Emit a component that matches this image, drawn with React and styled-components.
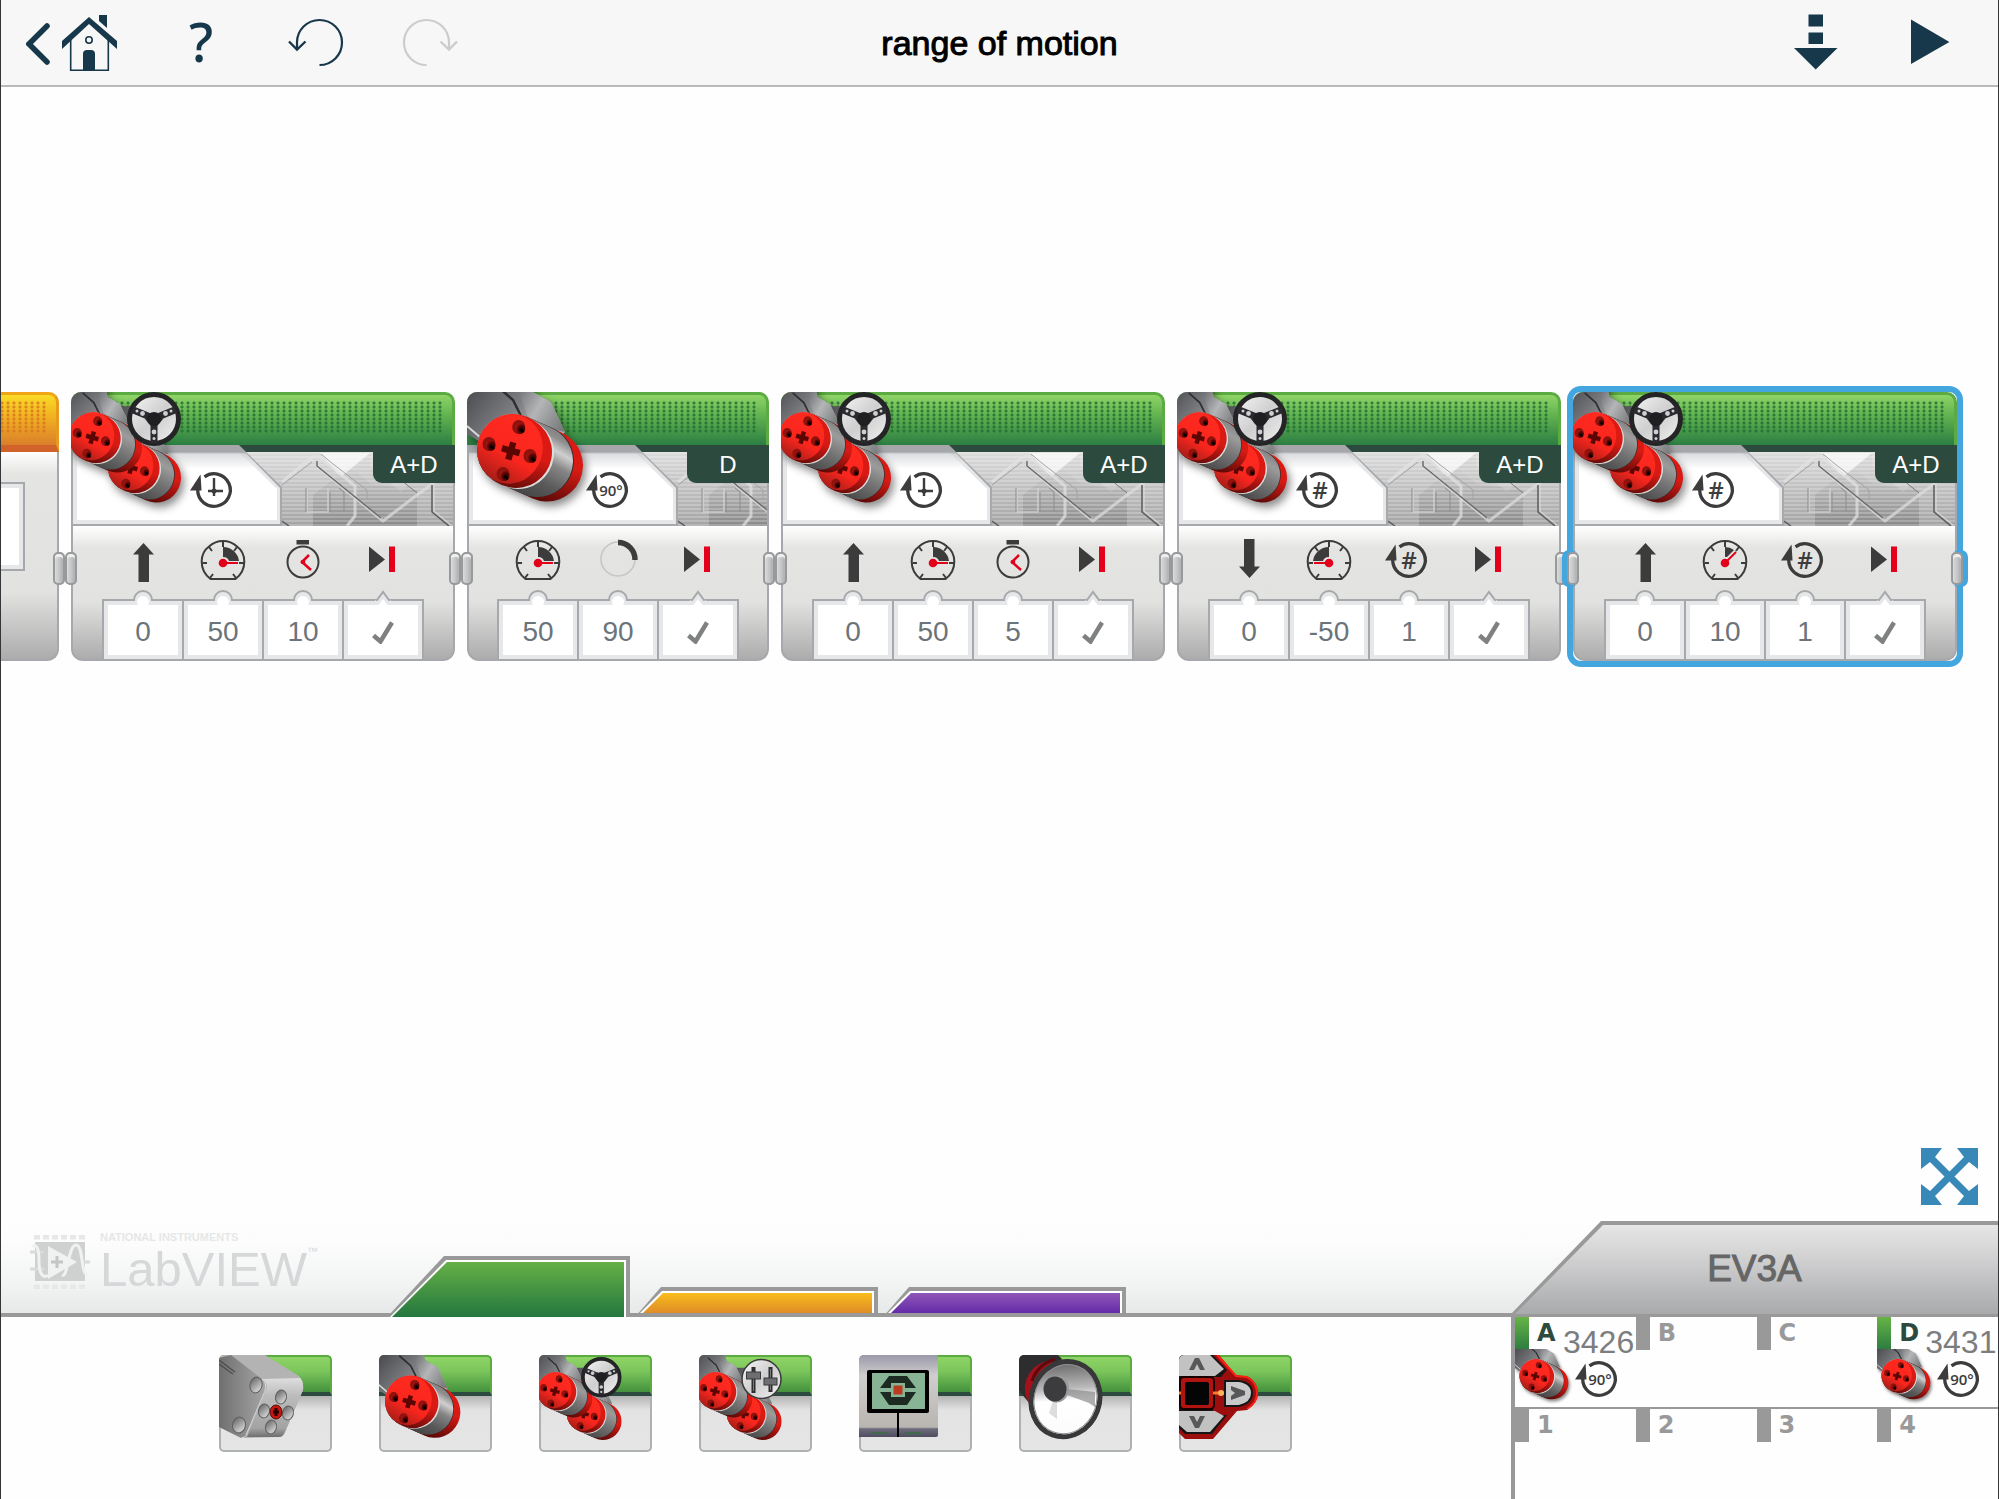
import React from "react";
import styled, { createGlobalStyle, css } from "styled-components";

const navy = "#17374a";
const line = "#999999";
const edge = "#a6a8ab";
const blue = "#43a6df";
const sans = `"Liberation Sans", Arial, sans-serif`;
const wide = `"DejaVu Sans", Verdana, sans-serif`;

const GlobalStyle = createGlobalStyle`
  *, *::before, *::after { box-sizing: border-box; }
  body { margin: 0; background: #fefefe; font-family: ${sans}; }
  svg { display: block; }
  button { margin: 0; padding: 0; border: 0; background: none; font: inherit; cursor: pointer; }
`;

const Page = styled.div`
  display: flex;
  flex-direction: column;
  min-height: 100vh;
  border: solid #333538;
  border-width: 0 1px;
  overflow: hidden;
`;

/* ---------- toolbar ---------- */

const Toolbar = styled.header`
  display: grid;
  grid-template-columns: 1fr auto 1fr;
  align-items: center;
  height: 87px;
  padding: 0 49px 0 25px;
  background: #f7f7f7;
  border-bottom: 2px solid #b9b9b9;
`;

const ToolGroup = styled.div`
  display: flex;
  align-items: center;
  justify-content: ${(p) => (p.$end ? "flex-end" : "flex-start")};
  gap: ${(p) => (p.$end ? "73px" : "58px")};
`;

const ToolButton = styled.button`
  display: flex;
  align-items: center;
  justify-content: center;
  width: ${(p) => p.$width}px;
  height: 64px;
  color: ${navy};
  &:disabled { color: #cccccc; cursor: default; }
`;

const Help = styled.span`
  padding-bottom: 4px;
  font: 500 54px/60px "Noto Sans", "Open Sans", sans-serif;
`;

const Title = styled.h1`
  margin: 0;
  padding-left: 24px;
  font: 400 34px/40px ${sans};
  color: #000;
  -webkit-text-stroke: 1px #000;
`;

/* ---------- canvas ---------- */

const Canvas = styled.main`
  flex: 1;
  display: flex;
  flex-direction: column;
  justify-content: space-between;
  align-items: flex-end;
  padding: 305px 20px 16px 0;
`;

const Program = styled.div`
  display: flex;
  gap: 12px;
  width: 100%;
  padding-right: 21px;
`;

const BlockBox = styled.section`
  position: relative;
  flex: none;
  display: flex;
  flex-direction: column;
  width: ${(p) => p.$width}px;
  height: 269px;
  border-radius: 10px 10px 12px 12px;
  ${(p) =>
    p.$selected &&
    css`
      &::before {
        content: "";
        position: absolute;
        inset: -6px;
        border: 6px solid ${blue};
        border-radius: 14px;
      }
    `}
`;

const StartBox = styled(BlockBox)`
  flex: 1;
  width: auto;
  min-width: 0;
`;

const dots = (c) => css`
  &::after {
    content: "";
    position: absolute;
    inset: 6px 9px 12px 0;
    background: radial-gradient(circle, ${c} 1px, transparent 2px) right top / 6px 4px;
    opacity: 0.8;
  }
`;

const Head = styled.div`
  position: relative;
  height: 53px;
  border: solid #5cab42;
  border-width: 3px 3px 0 0;
  border-radius: 10px 10px 0 0;
  background: linear-gradient(#8fd466, #62b350 40%, #2c7f42);
  ${dots("#1f6d33")}
`;

const StartHead = styled(Head)`
  height: 60px;
  border-width: 3px 3px 7px 0;
  border-color: #f0a518 #e89a1c #d0622a;
  border-radius: 0 10px 0 0;
  background: linear-gradient(#fadb25, #f0b022 45%, #da7f2a);
  ${dots("#d8741f")}
`;

const Middle = styled.div`
  position: relative;
  display: flex;
  align-items: flex-start;
  height: 81px;
  border-top: 7px solid #2c4a3d;
  border-bottom: 2px solid ${edge};
  border-left: 2px solid ${edge};
  overflow: visible;
`;

const Texture = styled.svg`
  position: absolute;
  left: -2px;
  top: 0;
  width: calc(100% + 2px);
  height: 74px;
  border-right: 2px solid ${edge};
`;

const ModePanel = styled.button`
  position: relative;
  width: 211px;
  height: 81px;
  margin: -7px 0 0 -2px;
  background: ${edge};
  clip-path: polygon(0 0, 168px 0, 211px 42px, 211px 100%, 0 100%);
  &::before {
    content: "";
    position: absolute;
    inset: 0;
    background: linear-gradient(#a6a7aa 0, #a6a7aa 7px, #d2d3d5 9px, #e6e7e9 18px);
    clip-path: polygon(2px 0, 167px 0, 209px 43px, 209px 79px, 2px 79px);
  }
  &::after {
    content: "";
    position: absolute;
    inset: 0;
    background: linear-gradient(#a6a7aa 0, #a6a7aa 7px, #dcdddf 9px, #ffffff 24px);
    clip-path: polygon(6px 7px, 168px 7px, 206px 44px, 206px 75px, 6px 75px);
  }
`;

const ModeIcon = styled.span`
  position: absolute;
  z-index: 1;
  left: 119px;
  top: 21px;
`;

const PortTag = styled.button`
  position: relative;
  width: 82px;
  height: 31px;
  margin-left: auto;
  padding-bottom: 6px;
  border-bottom-left-radius: 9px;
  background: #2c4a3d;
  color: #fff;
  font: 400 24px/24px ${sans};
`;

const Art = styled.svg`
  position: absolute;
  left: 0;
  top: 0;
  width: 130px;
  height: 130px;
  border-top-left-radius: ${(p) => (p.$tile ? 5 : 10)}px;
  pointer-events: none;
`;

const Body = styled.div`
  flex: 1;
  display: flex;
  justify-content: center;
  border: 2px solid ${edge};
  border-top: 0;
  border-radius: 0 0 12px 12px;
  background: linear-gradient(#ffffff, #e4e4e2 22px, #e2e2e1 75px, #acacac);
`;

const StartBody = styled(Body)`
  justify-content: flex-end;
  padding: 30px 32px 0 0;
  border-left: 0;
  border-radius: 0 0 12px 0;
  background: linear-gradient(#ffffff, #e4e4e2 22px, #e2e2e1 140px, #acacac);
`;

const StartField = styled.div`
  width: 60px;
  flex: none;
  height: 89px;
  border: 2px solid ${edge};
  background: #fff;
  box-shadow: inset 0 0 0 4px #e6e7e9;
`;

const Param = styled.div`
  display: flex;
  flex-direction: column;
  align-items: center;
  width: 80px;
  padding-top: 10px;
  &:last-child { width: 82px; }
`;

const ParamIcon = styled.div`
  height: 63px;
  padding-left: 2px;
`;

const Cell = styled.label`
  position: relative;
  display: flex;
  align-items: center;
  justify-content: center;
  width: 100%;
  flex: 1;
  padding-top: 3px;
  border: solid ${edge};
  border-width: 2px 0 0 2px;
  background: #fff;
  box-shadow: inset 0 0 0 4px #e6e7e9;
  ${Param}:last-child & { border-right-width: 2px; }
`;

const Notch = styled.svg`
  position: absolute;
  left: calc(50% - 14px);
  top: -11px;
`;

const Value = styled.input`
  width: 68px;
  height: 44px;
  padding: 0;
  border: 0;
  background: none;
  text-align: center;
  font: 400 28px/32px ${sans};
  color: #6b747b;
  outline: none;
`;

const Tick = styled.input`
  position: absolute;
  inset: 0;
  width: 100%;
  height: 100%;
  margin: 0;
  opacity: 0;
`;

const Plug = styled.span`
  position: absolute;
  top: 160px;
  ${(p) => (p.$side === "left" ? "left: -6px;" : "right: -6px;")}
  width: 12px;
  height: 33px;
  border: 2px solid #97999b;
  border-radius: 5px;
  background: linear-gradient(90deg, #d9dadb, #c2c3c4 60%, #a9aaab);
  box-shadow: inset 0 3px 1px #f0f0f0
    ${(p) => (p.$selected ? `, ${p.$side === "left" ? "-3px" : "3px"} 0 0 2px ${blue}` : "")};
`;

const FitButton = styled.button`
  width: 57px;
  height: 57px;
`;

/* ---------- footer ---------- */

const Footer = styled.footer`
  display: grid;
  grid-template-columns: minmax(0, 1fr) 487px;
`;

const Palette = styled.div`
  display: flex;
  flex-direction: column;
`;

const stripFill = "linear-gradient(#fefefe, #fcfcfc 25%, #f3f4f4 65%, #e7e9e9)";

const TabStrip = styled.div`
  display: flex;
  align-items: flex-end;
  height: 96px;
  padding-left: 29px;
  border-bottom: 4px solid ${line};
  background: ${stripFill};
`;

const Logo = styled.div`
  display: flex;
  align-items: flex-start;
  gap: 10px;
  width: 357px;
  height: 82px;
`;

const LogoIcon = styled.svg`
  margin-top: 4px;
`;

const LogoText = styled.div`
  display: flex;
  flex-direction: column;
  gap: 2px;
  color: #d6d7d8;
`;

const Maker = styled.span`
  font: 700 11px/12px ${sans};
  color: #e6e7e7;
`;

const Product = styled.span`
  display: flex;
  align-items: flex-start;
  font: 400 49px/48px ${sans};
`;

const Mark = styled.sup`
  font: 400 11px/12px ${sans};
`;

const Tabs = styled.nav`
  display: flex;
  align-items: flex-end;
  gap: 5px;
  margin-bottom: -4px;
`;

const Tab = styled.button`
  position: relative;
  width: 243px;
  height: ${(p) => (p.$open ? 61 : 30)}px;
  background: ${line};
  clip-path: ${(p) =>
    p.$open
      ? "polygon(57px 0, 100% 0, 100% 100%, 0 100%)"
      : "polygon(26px 0, 100% 0, 100% 100%, 0 100%)"};
  &::before, &::after {
    content: "";
    position: absolute;
    inset: 0;
  }
  &::before {
    background: #fff;
    clip-path: ${(p) =>
      p.$open
        ? "polygon(59px 4px, calc(100% - 4px) 4px, calc(100% - 4px) 100%, 3px 100%)"
        : "polygon(27px 4px, calc(100% - 4px) 4px, calc(100% - 4px) calc(100% - 4px), 5px calc(100% - 4px))"};
  }
  &::after {
    background: linear-gradient(${(p) => p.$from} 6px, ${(p) => p.$to});
    clip-path: ${(p) =>
      p.$open
        ? "polygon(60px 6px, calc(100% - 6px) 6px, calc(100% - 6px) 100%, 5px 100%)"
        : "polygon(28px 6px, calc(100% - 6px) 6px, calc(100% - 6px) calc(100% - 4px), 8px calc(100% - 4px))"};
  }
`;

const Tiles = styled.div`
  display: flex;
  gap: 47px;
  padding: 38px 0 47px 218px;
`;

const Tile = styled.button`
  position: relative;
  display: flex;
  flex-direction: column;
  flex: none;
  width: 113px;
  height: 97px;
`;

const TileHead = styled.span`
  width: 100%;
  height: 41px;
  border: solid #5cab42;
  border-width: 2px 2px 4px 0;
  border-bottom-color: #2c4a3d;
  border-radius: 5px 5px 0 0;
  background: linear-gradient(#8fd466, #7cc65c 40%, #43923c);
`;

const TileBody = styled.span`
  width: 100%;
  flex: 1;
  border: 2px solid #adb1b2;
  border-top: 0;
  border-radius: 0 0 5px 5px;
  background: linear-gradient(#b4b4b4, #e3e3e3 14px, #e5e5e5);
`;

const Brick = styled.aside`
  display: flex;
  flex-direction: column;
`;

const BrickTab = styled.div`
  height: 96px;
  background: ${stripFill};
  border-bottom: 4px solid ${line};
`;

const BrickName = styled.button`
  position: relative;
  width: 100%;
  height: 93px;
  padding-top: 2px;
  background: ${line};
  clip-path: polygon(90px 0, 100% 0, 100% 100%, 0 100%);
  color: #666;
  font: 400 37px/40px ${sans};
  -webkit-text-stroke: 1px #666;
  &::before {
    content: "";
    position: absolute;
    inset: 0;
    background: linear-gradient(#e8e8e8, #d4d4d5 35%, #a9aaac);
    clip-path: polygon(92px 4px, 100% 4px, 100% 100%, 4px 100%);
  }
`;

const BrickLabel = styled.span`
  position: relative;
`;

const Ports = styled.div`
  flex: 1;
  border-left: 4px solid ${line};
`;

const PortRow = styled.div`
  display: grid;
  grid-template-columns: repeat(4, 1fr);
  height: 90px;
  & + & { border-top: 2px solid ${line}; }
`;

const Port = styled.div`
  position: relative;
  display: flex;
  align-items: flex-start;
  &::before {
    content: "";
    flex: none;
    width: 14px;
    height: 33px;
    background: ${(p) => (p.$live ? "linear-gradient(#67b346, #2b7c40)" : line)};
  }
`;

const PortName = styled.span`
  width: 34px;
  flex: none;
  padding: 2px 0 0 8px;
  font: 700 24px/28px ${wide};
  color: ${(p) => (p.$live ? "#2c4a3d" : line)};
`;

const Reading = styled.span`
  padding-top: 8px;
  font: 400 32px/34px ${sans};
  color: #7c7d7f;
`;

const PortArt = styled.svg`
  position: absolute;
  left: 0;
  top: 32px;
`;

const PortMode = styled.span`
  position: absolute;
  left: 60px;
  top: 38px;
`;

/* ---------- drawings ---------- */

const ink = "#3c3c3d";
const red = "#e2001a";

const HiddenSvg = styled.svg`
  position: absolute;
`;

const Defs = () => (
  <HiddenSvg width="0" height="0" aria-hidden="true">
    <defs>
      <linearGradient id="steel" gradientUnits="userSpaceOnUse" x1="95" y1="25" x2="48" y2="108">
        <stop offset="0" stopColor="#6e6e6e" />
        <stop offset=".22" stopColor="#8d8d8d" />
        <stop offset=".34" stopColor="#d0d0d0" />
        <stop offset=".48" stopColor="#858585" />
        <stop offset=".7" stopColor="#5a5a5a" />
        <stop offset="1" stopColor="#3c3c3c" />
      </linearGradient>
      <linearGradient id="steelDim" gradientUnits="userSpaceOnUse" x1="95" y1="25" x2="48" y2="108">
        <stop offset="0" stopColor="#6e6e6e" />
        <stop offset=".3" stopColor="#9c9c9c" />
        <stop offset=".55" stopColor="#757575" />
        <stop offset="1" stopColor="#3f3f3f" />
      </linearGradient>
      <linearGradient id="rim" gradientUnits="userSpaceOnUse" x1="85" y1="25" x2="60" y2="110">
        <stop offset="0" stopColor="#e01810" />
        <stop offset=".5" stopColor="#d81a14" />
        <stop offset="1" stopColor="#4a0806" />
      </linearGradient>
      <linearGradient id="face" x1=".6" y1="0" x2=".4" y2="1">
        <stop offset="0" stopColor="#ff2b20" />
        <stop offset=".6" stopColor="#fa261e" />
        <stop offset="1" stopColor="#a81e18" />
      </linearGradient>
      <linearGradient id="case" gradientUnits="userSpaceOnUse" x1="0" y1="0" x2="60" y2="50">
        <stop offset="0" stopColor="#4c4d50" />
        <stop offset=".6" stopColor="#7d7e81" />
        <stop offset="1" stopColor="#b0b1b3" />
      </linearGradient>
      <linearGradient id="caseSide" gradientUnits="userSpaceOnUse" x1="50" y1="0" x2="100" y2="30">
        <stop offset="0" stopColor="#727376" />
        <stop offset=".45" stopColor="#b4b5b7" />
        <stop offset="1" stopColor="#77787a" />
      </linearGradient>
      <radialGradient id="hole" cx=".65" cy=".6" r=".6">
        <stop offset="0" stopColor="#1c0000" />
        <stop offset=".6" stopColor="#5c0503" />
        <stop offset="1" stopColor="#a01510" />
      </radialGradient>
      <linearGradient id="disc" x1="0" y1="0" x2="1" y2="1">
        <stop offset="0" stopColor="#f7f7f7" />
        <stop offset=".5" stopColor="#cfcfd0" />
        <stop offset="1" stopColor="#f1f1f1" />
      </linearGradient>
      <linearGradient id="plate" x1="0" y1="0" x2="0" y2="1">
        <stop offset="0" stopColor="#dcdcdc" />
        <stop offset="1" stopColor="#a3a3a4" />
      </linearGradient>
      <linearGradient id="shade" x1="0" y1="0" x2="0" y2="1">
        <stop offset="0" stopColor="#000" stopOpacity="0" />
        <stop offset="1" stopColor="#000" stopOpacity=".16" />
      </linearGradient>
      <pattern id="brush" width="8" height="4" patternUnits="userSpaceOnUse">
        <rect width="8" height="2" fill="#fff" opacity=".22" />
      </pattern>
      <linearGradient id="beamSide" x1="0" y1="0" x2="1" y2="0">
        <stop offset="0" stopColor="#6f6f6f" />
        <stop offset="1" stopColor="#a6a6a6" />
      </linearGradient>
      <linearGradient id="beamFace" x1="0" y1="0" x2="0" y2="1">
        <stop offset="0" stopColor="#dedede" />
        <stop offset=".3" stopColor="#bcbcbc" />
        <stop offset=".85" stopColor="#a3a3a3" />
        <stop offset="1" stopColor="#6f6f6f" />
      </linearGradient>
      <linearGradient id="beamHole" x1="0" y1="0" x2="1" y2="1">
        <stop offset="0" stopColor="#5a5a5a" />
        <stop offset="1" stopColor="#ededed" />
      </linearGradient>
      <linearGradient id="shell" x1="0" y1="0" x2="0" y2="1">
        <stop offset="0" stopColor="#9a99a8" />
        <stop offset=".25" stopColor="#cfcdce" />
        <stop offset=".88" stopColor="#b9b5b0" />
        <stop offset=".9" stopColor="#6d6c7c" />
        <stop offset="1" stopColor="#4f4e60" />
      </linearGradient>
      <linearGradient id="cone" x1=".2" y1="0" x2=".6" y2="1">
        <stop offset="0" stopColor="#555" />
        <stop offset=".4" stopColor="#b9b9b9" />
        <stop offset=".55" stopColor="#fff" />
        <stop offset="1" stopColor="#fbfbfb" />
      </linearGradient>
    </defs>
  </HiddenSvg>
);

const Motor = ({ dim }) => (
  <g>
    <path d="M0-30H60L66 0 84 10 98 40 70 70 30 60 0 42Z" fill="url(#case)" />
    <path d="M50-30H60L66 0 84 10 98 40 78 36 62 28 54 6Z" fill="url(#caseSide)" />
    <path d="M30-6 46 8 56 28" fill="none" stroke="#2e2f31" strokeWidth="2.5" />
    <path d="M0 34 14 46" stroke="#d8d8d8" strokeWidth="2" />
    <g fill="none" strokeLinecap="round">
      <path d="M46 58 80 73.500" stroke="url(#rim)" strokeWidth="72" />
      <path d="M46 58 71 69" stroke="#2e2e2e" strokeWidth="72" />
      <path d="M46 58 70 69" stroke={dim ? "url(#steelDim)" : "url(#steel)"} strokeWidth="72" />
      <path d="M46 58 51 61" stroke="#dcdcdc" strokeWidth="72" />
      <path d="M46 58 49 60" stroke="url(#rim)" strokeWidth="72" />
    </g>
    <ellipse cx="43" cy="57" rx="32.500" ry="35" fill="url(#face)" transform="rotate(18 43 57)" />
    {[[51.7, 35], [22, 52], [63, 64], [36, 82]].map(([x, y]) => (
      <g key={x}>
        <ellipse cx={x} cy={y} rx="6.500" ry="7" fill="#8d120d" />
        <ellipse cx={x + 1.5} cy={y + 1.5} rx="5" ry="5.500" fill="url(#hole)" />
        <path d={`M${x + 1} ${y + 2}l4 3`} stroke="#000" strokeWidth="2.500" />
      </g>
    ))}
    <path
      d="M40.500 50h6.500v5.500h6v6.500h-6v6h-6.500v-6h-6v-6.500h6Z"
      fill="#5c0604"
      transform="rotate(16 44 59)"
    />
  </g>
);

const Shadowed = styled.g`
  filter: drop-shadow(3px 5px 4px rgba(0, 0, 0, 0.45));
`;

const Duo = () => (
  <g>
    <g transform="translate(30 35) scale(.69)">
      <Motor dim />
    </g>
    <g transform="translate(-9 5) scale(.69)">
      <Motor dim />
    </g>
  </g>
);

const Wheel = () => (
  <g>
    <circle cx="83" cy="27" r="24.500" fill="url(#disc)" stroke="#242326" strokeWidth="5" />
    <path d="M61 17.500 83 26.500 105 17.500M83 26V51" fill="none" stroke="#2b2a2e" strokeWidth="7" />
    <path d="M76 21H90L92 27 86 34H80L74 27Z" fill="#2b2a2e" />
    <circle cx="83" cy="27" r="7" fill="#1f1e21" />
    <g fill="#cfcfd1">
      <circle cx="71.500" cy="21.500" r="2.400" />
      <circle cx="66" cy="19" r="1.500" />
      <circle cx="94.500" cy="21.500" r="2.400" />
      <circle cx="100" cy="19" r="1.500" />
      <circle cx="83" cy="40" r="2.400" />
      <circle cx="83" cy="46.500" r="1.500" />
    </g>
  </g>
);

const Spin = ({ children }) => (
  <svg width="48" height="48" viewBox="0 0 48 48">
    <path d="M14.500 10.800A16.300 16.300 0 1 1 7.700 24" fill="none" stroke={ink} strokeWidth="3.300" />
    <path d="M10.500 8.500 0 24.500H11.500Z" fill={ink} />
    {children}
  </svg>
);

const SpinText = styled.text`
  font: 600 ${(p) => p.$size}px "Open Sans", "Noto Sans", sans-serif;
  fill: ${ink};
  text-anchor: middle;
`;

const Seconds = () => (
  <Spin>
    <path d="M24 12V30M18 25H33" stroke={ink} strokeWidth="2.400" />
    <circle cx="24" cy="25" r="2.500" fill={ink} />
  </Spin>
);
const Degrees = () => (
  <Spin>
    <SpinText $size={15} x="25" y="30">90°</SpinText>
  </Spin>
);
const Turns = () => (
  <Spin>
    <SpinText $size={24} x="24" y="33">#</SpinText>
  </Spin>
);

const Arrow = ({ down }) => (
  <svg width="48" height="48" viewBox="0 0 48 48">
    <path
      d="M24.500 7 35 18.500H30V46H19.500V18.500H14Z"
      fill={ink}
      transform={down ? "rotate(180 24.500 24.500)" : undefined}
    />
  </svg>
);

const Gauge = ({ wedge, tip }) => (
  <svg width="48" height="48" viewBox="0 0 48 48">
    <path d={wedge} fill={ink} />
    <path
      d="M11.500 43H36.500C49 33 47 17 38 10.500A20.500 20.500 0 0 0 10 10.500C1 17-1 33 11.500 43Z"
      fill="none"
      stroke={ink}
      strokeWidth="2"
    />
    <path d="M24 6V11M3.500 27H8M40 27H45M10 11 13 15M38 11 35 15M11 42 14 38M37 42 34 38" stroke={ink} strokeWidth="2" />
    <path d={`M24 27 ${tip}`} stroke={red} strokeWidth="2" />
    <circle cx="24" cy="27" r="4.300" fill={red} />
  </svg>
);

const Stopwatch = () => (
  <svg width="48" height="48" viewBox="0 0 48 48">
    <rect x="17.500" y="4" width="12.500" height="4.500" fill={ink} />
    <circle cx="24" cy="26" r="15.500" fill="none" stroke={ink} strokeWidth="2" />
    <path d="M30 19 23 26 32 34" fill="none" stroke={red} strokeWidth="2.500" />
    <circle cx="24" cy="26" r="2.300" fill={red} />
  </svg>
);

const Angle = () => (
  <svg width="48" height="48" viewBox="0 0 48 48">
    <circle cx="24" cy="23" r="17" fill="none" stroke="#c4c5c6" strokeWidth="1.500" />
    <path d="M24 6.500A17 17 0 0 1 41 24" fill="none" stroke={ink} strokeWidth="5.500" />
  </svg>
);

const Brake = () => (
  <svg width="48" height="48" viewBox="0 0 48 48">
    <path d="M9 10.500 25 23.500 9 36Z" fill={ink} />
    <rect x="29" y="10.500" width="6" height="25.500" fill={red} />
  </svg>
);

const quarter = "M24 11A16 16 0 0 1 40 25H30A6 6 0 0 0 24 21Z";
const icons = {
  up: <Arrow />,
  down: <Arrow down />,
  power50: <Gauge wedge={quarter} tip="39 27" />,
  powerBack: <Gauge wedge="M24 11A16 16 0 0 0 8 25H18A6 6 0 0 1 24 21Z" tip="9 27" />,
  power10: <Gauge wedge="M24 11A16 16 0 0 1 33 14L26 21 24 21Z" tip="35 16" />,
  timer: <Stopwatch />,
  angle: <Angle />,
  turns: <Turns />,
  brake: <Brake />,
};
const modes = { seconds: <Seconds />, degrees: <Degrees />, turns: <Turns /> };

const Plate = () => (
  <Texture aria-hidden="true">
    <rect width="400" height="74" fill="url(#plate)" />
    <path d="M249 1H299L271 24 266 21Z" fill="#fff" opacity=".7" />
    <path d="M299 1H372L330 40 299 14Z" fill="#fff" opacity=".15" />
    <path d="M242 74V43L279 14 300 32 346 38V74Z" fill="url(#shade)" />
    <rect width="400" height="74" fill="url(#brush)" />
    <g fill="none" strokeLinejoin="round">
      <path d="M211 30 240 6Q246 2 250 6L284 34V64L276 74" stroke="#e3e3e3" strokeWidth="3" opacity=".7" />
      <path d="M211 33 241 10" stroke="#8f8f8f" strokeWidth="1" opacity=".7" />
      <path d="M262 12 296 38V48M250 2 262 12" stroke="#a3a3a3" strokeWidth="1" />
      <path d="M247 10V15L312 69 346 43 372 24" stroke="#dedede" strokeWidth="3" opacity=".7" />
      <path d="M246 9V14L310 66" stroke="#6c6c6c" strokeWidth="1.500" />
      <path d="M236 36V60H257V36" stroke="#d5d5d5" strokeWidth="2" opacity=".6" />
      <path d="M235 36V60M259 60V40M273 60V40L268 36" stroke="#8d8d8d" strokeWidth="1" />
      <path d="M330 28 346 41" stroke="#7a7a7a" strokeWidth="1" />
      <path d="M361 33V60L378 74M211 69 218 74" stroke="#5c5c5c" strokeWidth="1.500" />
      <path d="M363 33V59L380 73" stroke="#dedede" strokeWidth="1" />
    </g>
  </Texture>
);

const RoundNotch = () => (
  <Notch width="28" height="18" viewBox="0 0 28 18" aria-hidden="true">
    <path d="M3 10H5A9 9 0 0 1 23 10H25" fill="#e6e7e9" stroke={edge} strokeWidth="2" />
    <path d="M6 10V11H22V10Z" fill="#e6e7e9" />
    <circle cx="14" cy="12" r="6" fill="#fff" />
  </Notch>
);

const PeakNotch = () => (
  <Notch width="28" height="18" viewBox="0 0 28 18" aria-hidden="true">
    <path d="M6 10 8 10 14 2 20 10 22 10 20 13H8Z" fill="#e6e7e9" />
    <path d="M7 10H8L14 2 20 10H21" fill="none" stroke={edge} strokeWidth="2" />
    <path d="M8 17 14 9 20 17Z" fill="#fff" />
  </Notch>
);

const Block = ({ width, port, mode, duo, params, selected }) => (
  <BlockBox $width={width} $selected={selected}>
    <Head />
    <Middle>
      <Plate />
      <ModePanel aria-label={`Mode: ${mode}`}>
        <ModeIcon>{modes[mode]}</ModeIcon>
      </ModePanel>
      <PortTag>{port}</PortTag>
    </Middle>
    <Body>
      {params.map(([icon, value]) => (
        <Param key={icon}>
          <ParamIcon>{icons[icon]}</ParamIcon>
          {value === true ? (
            <Cell>
              <Tick type="checkbox" defaultChecked aria-label="Brake at end" />
              <PeakNotch />
              <svg width="24" height="24" viewBox="0 0 24 24">
                <path d="M2.500 15.500 9.500 21.500 21 2.500" fill="none" stroke="#7f8080" strokeWidth="4.500" />
              </svg>
            </Cell>
          ) : (
            <Cell>
              <RoundNotch />
              <Value aria-label={icon} defaultValue={value} />
            </Cell>
          )}
        </Param>
      ))}
    </Body>
    <Art viewBox="0 0 130 130" aria-hidden="true">
      <Shadowed>{duo ? <Duo /> : <Motor />}</Shadowed>
      {duo && <Wheel />}
    </Art>
    <Plug $side="left" $selected={selected} />
    <Plug $side="right" $selected={selected} />
  </BlockBox>
);

const blocks = [
  { width: 384, port: "A+D", mode: "seconds", duo: true, params: [["up", "0"], ["power50", "50"], ["timer", "10"], ["brake", true]] },
  { width: 302, port: "D", mode: "degrees", params: [["power50", "50"], ["angle", "90"], ["brake", true]] },
  { width: 384, port: "A+D", mode: "seconds", duo: true, params: [["up", "0"], ["power50", "50"], ["timer", "5"], ["brake", true]] },
  { width: 384, port: "A+D", mode: "turns", duo: true, params: [["down", "0"], ["powerBack", "-50"], ["turns", "1"], ["brake", true]] },
  { width: 384, port: "A+D", mode: "turns", duo: true, selected: true, params: [["up", "0"], ["power10", "10"], ["turns", "1"], ["brake", true]] },
];

const Beam = () => (
  <g>
    <path d="M0 2 4 0H46L80 21Q85 26 84 35L66 77Q64 82 60 82L26 83 0 72Z" fill="#b3b3b3" />
    <path d="M0 3 12 0 43 24Q48 28 46 36L27 80 22 83 0 72Z" fill="url(#beamSide)" />
    <path d="M0 5 16 17M0 9 14 19" stroke="#4f4f4f" strokeWidth="1.500" />
    <path d="M43 24Q50 28 47 36L28 82H60Q64 82 66 77L84 35Q85 27 81 23Z" fill="url(#beamFace)" />
    <path d="M43 24Q48 28 46 36L27 80" fill="none" stroke="#d5d5d5" strokeWidth="1" />
    {[[37, 30, 6, 8], [20, 70, 6.5, 8], [62, 42, 5.5, 7], [45, 56, 5.5, 7], [69, 58, 5.5, 7], [52, 72, 5.5, 7]].map(([x, y, rx, ry]) => (
      <ellipse key={x} cx={x} cy={y} rx={rx} ry={ry} fill="url(#beamHole)" stroke="#5f5f5f" strokeWidth="1" transform={`rotate(12 ${x} ${y})`} />
    ))}
    <ellipse cx="57" cy="57" rx="6" ry="7" fill="#c4170f" stroke="#5a0a06" strokeWidth="1" />
    <path d="M57 53V61M54 57H60" stroke="#2a0000" strokeWidth="3" />
  </g>
);

const Sliders = () => (
  <g>
    <circle cx="62.500" cy="24" r="19.500" fill="url(#disc)" stroke="#3a3a3c" strokeWidth="1.500" />
    <path d="M54.500 12V38M71.500 12V37" stroke="#2f2f31" strokeWidth="4" />
    <path d="M54.500 16V36M71.500 14V35" stroke="#77787a" strokeWidth="1" />
    <rect x="47.500" y="17" width="14" height="7" fill="#6d6e70" stroke="#39393b" />
    <rect x="65" y="23" width="13" height="7" fill="#6d6e70" stroke="#39393b" />
  </g>
);

const Display = () => (
  <g>
    <path d="M0 2 2 0H79V80Q79 82 77 82H0Z" fill="url(#shell)" />
    <rect x="8" y="15" width="62" height="43" rx="2" fill="#000" />
    <rect x="13" y="18" width="53" height="36" fill="#86b495" />
    <path d="M21 33 30 21H48L57 33ZM21 37 30 50H48L57 37Z" fill="#1d2a22" />
    <rect x="32" y="28" width="14" height="14" fill="#86b495" />
    <rect x="34.500" y="30.500" width="9" height="9" fill="#b93a1e" />
    <path d="M39 58V82" stroke="#000" strokeWidth="2" />
    <path d="M12 78H28M46 78H62" stroke="#3f6a4c" strokeWidth="2" />
  </g>
);

const Speaker = () => (
  <g>
    <path d="M0 4Q0 0 4 0H39L43 4 12 50 0 36Z" fill="#2d2d2f" />
    <path d="M36 4Q10 8 6 30 5 40 10 48L22 20Z" fill="#a3121a" />
    <path d="M36 4Q18 10 13 26" fill="none" stroke="#5c0a0e" strokeWidth="3" />
    <g transform="rotate(20 46 44)">
      <ellipse cx="46.500" cy="44" rx="34" ry="38" fill="url(#cone)" stroke="#38383a" strokeWidth="5" />
      <ellipse cx="46.500" cy="44" rx="31" ry="35" fill="none" stroke="#8f8f90" strokeWidth="1" />
    </g>
    <path d="M48 34 76 37 76 52 70 48 48 40Z" fill="#8b8b8b" opacity=".7" />
    <path d="M34 46 30 58 38 64 38 46Z" fill="#bbb" opacity=".5" />
    <ellipse cx="37.500" cy="34" rx="12.500" ry="13.500" fill="#9a9a9b" />
    <ellipse cx="36" cy="34" rx="11.500" ry="12.500" fill="#3c3c3e" />
  </g>
);

const Buttons = () => (
  <g>
    <path d="M0 0H40L57 20 70 22Q79 28 79 38T68 55L58 56 34 84H6L0 78Z" fill="#9c0d0d" />
    <path d="M38 0 57 21 68 22Q78 28 78 38T68 54" fill="none" stroke="#ff1f14" strokeWidth="2" />
    <path d="M0 0H34L48 15 42 22H34V60L48 60 33 79H6L0 73Z" fill="#161616" />
    <path d="M0 3 3 0H31L45 14 36 21H0ZM0 56H36L45 61 31 77H8L0 70Z" fill="#c2c2c3" />
    <rect x="1" y="22" width="34" height="32" rx="4" fill="#b01410" stroke="#190000" strokeWidth="2" />
    <rect x="6" y="27" width="24" height="23" rx="2" fill="#050505" />
    <path d="M34 38H46M0 38H2" stroke="#ff7a28" strokeWidth="3" />
    <circle cx="42" cy="38" r="3" fill="#ffb25e" />
    <path d="M46 26H60Q73 28 73 38T60 51H46Z" fill="#c9c9ca" stroke="#161616" strokeWidth="2" />
    <path d="M10 15 16 3H20L26 15H21L18 9 15 15ZM10 61H15L18 67 21 61H26L20 73H16ZM52 31 66 36V40L52 45V41L56 38 52 35Z" fill="#58585a" />
  </g>
);

const tiles = [
  ["Medium motor", <Beam />],
  ["Large motor", <g transform="translate(-1 5) scale(.71)"><Motor /></g>],
  ["Move steering", <g transform="translate(0 2) scale(.75)"><Duo /><Wheel /></g>],
  ["Move tank", <g><g transform="translate(0 2) scale(.75)"><Duo /></g><Sliders /></g>],
  ["Display", <Display />],
  ["Sound", <Speaker />],
  ["Brick status light", <Buttons />],
];

const ports = [
  [{ name: "A", reading: "3426" }, { name: "B" }, { name: "C" }, { name: "D", reading: "3431" }],
  [{ name: "1" }, { name: "2" }, { name: "3" }, { name: "4" }],
];

export default function App() {
  return (
    <Page>
      <GlobalStyle />
      <Defs />
      <Toolbar>
        <ToolGroup>
          <ToolButton $width={92} aria-label="Home">
            <svg width="92" height="64" viewBox="26 10 92 64">
              <path d="M47 25 29 43 47 61" fill="none" stroke="currentColor" strokeWidth="5.500" strokeLinecap="round" strokeLinejoin="miter" />
              <path d="M99 14H107V27L99 20Z" fill="currentColor" />
              <path d="M89 16 117 40V48L89 23 62 48V40Z" fill="currentColor" />
              <path d="M70.700 39V69.300H108.300V39" fill="none" stroke="currentColor" strokeWidth="1.600" />
              <circle cx="89" cy="39" r="3.200" fill="none" stroke="currentColor" strokeWidth="1.600" />
              <path d="M83 69V53Q83 49 87 49H91Q95 49 95 53V69Z" fill="currentColor" />
            </svg>
          </ToolButton>
          <ToolButton $width={50} aria-label="Help">
            <Help>?</Help>
          </ToolButton>
          {[false, true].map((redo) => (
            <ToolButton key={String(redo)} $width={60} disabled={redo} aria-label={redo ? "Redo" : "Undo"}>
              <svg width="60" height="64" viewBox="284 10 60 64">
                <g transform={redo ? "translate(628 0) scale(-1 1)" : undefined} fill="none" stroke="currentColor" strokeWidth="2.200">
                  <path d="M319.500 64A22.500 22.500 0 1 0 297 41.500V48" />
                  <path d="M289 40.500 297 48.500 305.500 40.500" strokeWidth="2.400" />
                </g>
              </svg>
            </ToolButton>
          ))}
        </ToolGroup>
        <Title>range of motion</Title>
        <ToolGroup $end>
          <ToolButton $width={44} aria-label="Download">
            <svg width="44" height="64" viewBox="1794 11 44 64">
              <path d="M1808.500 14.500H1823V26.500H1808.500ZM1808.500 32.500H1823V44H1808.500ZM1794 48H1837.500L1815.700 69.500Z" fill="currentColor" />
            </svg>
          </ToolButton>
          <ToolButton $width={38} aria-label="Run">
            <svg width="38" height="64" viewBox="1911 11 38 64">
              <path d="M1911 19.500 1949.500 42 1911 64Z" fill="currentColor" />
            </svg>
          </ToolButton>
        </ToolGroup>
      </Toolbar>

      <Canvas>
        <Program>
          <StartBox>
            <StartHead />
            <StartBody>
              <StartField />
            </StartBody>
            <Plug $side="right" />
          </StartBox>
          {blocks.map((b, i) => (
            <Block key={i} {...b} />
          ))}
        </Program>
        <FitButton aria-label="Fit to screen">
          <svg width="57" height="57" viewBox="0 0 57 57" fill="#3888b8">
            <path d="M0 0H21L14 9 28.500 23.500 43 9 36 0H57V21L48 14 33.500 28.500 48 43 57 36V57H36L43 48 28.500 33.500 14 48 21 57H0V36L9 43 23.500 28.500 9 14 0 21Z" />
          </svg>
        </FitButton>
      </Canvas>

      <Footer>
        <Palette>
          <TabStrip>
            <Logo>
              <LogoIcon width="60" height="54" viewBox="0 0 60 54" aria-hidden="true">
                <path d="M4 2H58M4 52H58" stroke="#e6e7e7" strokeWidth="5" strokeDasharray="6 3" />
                <rect x="5" y="7" width="50" height="39" fill="#cfd0d0" />
                <path d="M0 17H14M0 34H14M52 27H60" stroke="#d9dada" strokeWidth="3" />
                <path d="M2 12C6 8 9 12 9 26S14 44 18 40M32 40C38 44 38 10 46 10S50 40 58 40" fill="none" stroke="#f0f1f1" strokeWidth="3" />
                <path d="M18 11V44L47 27Z" fill="#f0f1f1" />
                <path d="M27 21V33M21 27H33" stroke="#c4c5c5" strokeWidth="3" />
              </LogoIcon>
              <LogoText>
                <Maker>NATIONAL INSTRUMENTS</Maker>
                <Product>
                  LabVIEW<Mark>™</Mark>
                </Product>
              </LogoText>
            </Logo>
            <Tabs>
              <Tab $open $from="#65b046" $to="#24773f" aria-label="Action blocks" />
              <Tab $from="#f8bd1b" $to="#da822a" aria-label="Flow blocks" />
              <Tab $from="#8f57b9" $to="#5c21a4" aria-label="Sensor blocks" />
            </Tabs>
          </TabStrip>
          <Tiles>
            {tiles.map(([name, art]) => (
              <Tile key={name} aria-label={name}>
                <TileHead />
                <TileBody />
                <Art $tile viewBox="0 0 130 130" aria-hidden="true">{art}</Art>
              </Tile>
            ))}
          </Tiles>
        </Palette>
        <Brick>
          <BrickTab>
            <BrickName>
              <BrickLabel>EV3A</BrickLabel>
            </BrickName>
          </BrickTab>
          <Ports>
            {ports.map((row, i) => (
              <PortRow key={i}>
                {row.map(({ name, reading }) => (
                  <Port key={name} $live={!!reading}>
                    <PortName $live={!!reading}>{name}</PortName>
                    {reading && (
                      <>
                        <Reading>{reading}</Reading>
                        <PortArt width="60" height="58" aria-hidden="true">
                          <Shadowed transform="scale(.46)">
                            <Motor />
                          </Shadowed>
                        </PortArt>
                        <PortMode>
                          <Degrees />
                        </PortMode>
                      </>
                    )}
                  </Port>
                ))}
              </PortRow>
            ))}
          </Ports>
        </Brick>
      </Footer>
    </Page>
  );
}
